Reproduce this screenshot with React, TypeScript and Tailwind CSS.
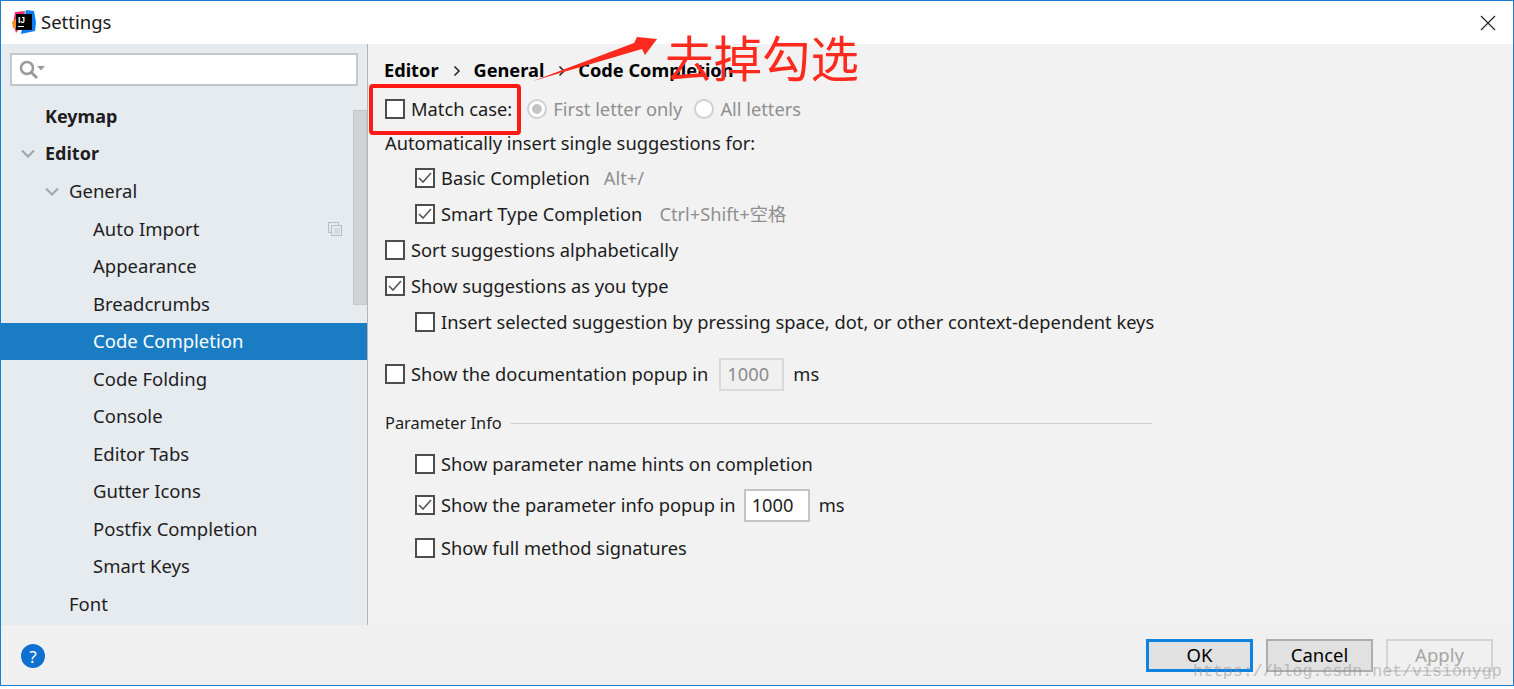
const font = { fontFamily: '"Noto Sans", "Noto Sans CJK SC", sans-serif' };

const treeItems = [
  { label: "Keymap", indent: "pl-[44px]", bold: true },
  { label: "Editor", indent: "pl-[44px]", bold: true, arrow: "left-[19px]" },
  { label: "General", indent: "pl-[68px]", arrow: "left-[43px]" },
  { label: "Auto Import", indent: "pl-[92px]", copy: true },
  { label: "Appearance", indent: "pl-[92px]" },
  { label: "Breadcrumbs", indent: "pl-[92px]" },
  { label: "Code Completion", indent: "pl-[92px]", selected: true },
  { label: "Code Folding", indent: "pl-[92px]" },
  { label: "Console", indent: "pl-[92px]" },
  { label: "Editor Tabs", indent: "pl-[92px]" },
  { label: "Gutter Icons", indent: "pl-[92px]" },
  { label: "Postfix Completion", indent: "pl-[92px]" },
  { label: "Smart Keys", indent: "pl-[92px]" },
  { label: "Font", indent: "pl-[68px]" },
];

function Logo() {
  return (
    <svg width="24" height="24" viewBox="0 0 24 24" className="mb-[2px] shrink-0">
      <polygon points="3,2 13,1 11,14 4,23 1,14" fill="#f2316e" />
      <polygon points="0,12 5,8 6,18 1,18" fill="#f78c1e" />
      <polygon points="14,0 22,1 24,12 23,21 9,24" fill="#087cfa" />
      <rect x="4" y="4" width="16" height="16" fill="#000" />
      <text x="6" y="12.5" fill="#fff" fontSize="8.5" fontWeight="700" style={{ fontFamily: '"Liberation Sans", sans-serif' }}>
        IJ
      </text>
      <rect x="6" y="16" width="6" height="1" fill="#fff" />
    </svg>
  );
}

function SearchIcon() {
  return (
    <svg width="26" height="22" viewBox="0 0 26 22">
      <circle cx="8" cy="9" r="6" fill="none" stroke="#9a9a9a" strokeWidth="2.6" />
      <path d="M12 13l6 6" stroke="#9a9a9a" strokeWidth="3" />
      <polygon points="18,7 26,7 22,11.5" fill="#9a9a9a" />
    </svg>
  );
}

function Chevron() {
  return (
    <svg width="16" height="10" viewBox="0 0 16 10">
      <path d="M2 1.5l6 6 6-6" fill="none" stroke="#9fa5aa" strokeWidth="2" />
    </svg>
  );
}

function CopyIcon() {
  return (
    <svg width="14" height="14" viewBox="0 0 14 14" className="absolute left-[327px] top-[12px]">
      <path d="M3.5 10.5h-3v-10h10v3" fill="none" stroke="#b9bec2" />
      <rect x="3.5" y="3.5" width="10" height="10" fill="none" stroke="#b9bec2" />
      <path d="M6 7h6M6 9h6M6 11h6" stroke="#c6cacd" />
    </svg>
  );
}

function Checkbox({ checked }: { checked?: boolean }) {
  return (
    <span className="mr-[6px] flex h-[20px] w-[20px] shrink-0 items-center justify-center border-2 border-[#4d4d4d] bg-white">
      {checked && (
        <svg width="16" height="16" viewBox="0 0 16 16">
          <path d="M2 8l4 4 8-9" fill="none" stroke="#5a5a5a" strokeWidth="1.7" />
        </svg>
      )}
    </span>
  );
}

function Radio({ checked }: { checked?: boolean }) {
  return (
    <span className="mr-[6px] flex h-[20px] w-[20px] shrink-0 items-center justify-center rounded-full border-2 border-[#cfcfcf] bg-white">
      {checked && <span className="h-[10px] w-[10px] rounded-full bg-[#c4c4c4]" />}
    </span>
  );
}

function CheckRow({
  label,
  checked,
  indent,
  className,
  children,
}: {
  label: string;
  checked?: boolean;
  indent?: boolean;
  className: string;
  children?: React.ReactNode;
}) {
  return (
    <div className={`flex items-center whitespace-nowrap ${indent ? "pl-[30px]" : ""} ${className}`}>
      <Checkbox checked={checked} />
      <span>{label}</span>
      {children}
    </div>
  );
}

function NumberBox({ disabled, className }: { disabled?: boolean; className: string }) {
  return (
    <span
      className={`flex h-[33px] items-center border-2 pl-[6px] ${
        disabled ? "w-[65px] border-[#d9d9d9] bg-[#f0f0f0] text-[#8c8c8c]" : "w-[66px] border-[#c4c4c4] bg-white"
      } ${className}`}
    >
      1000
    </span>
  );
}

function Sidebar() {
  return (
    <div className="relative flex w-[367px] shrink-0 flex-col overflow-hidden border-r border-[#b4b4b4] bg-[#e6ebf0]">
      <div className="mx-[9px] mt-[9px] flex h-[33px] w-[348px] items-center border-2 border-[#c4c7c9] bg-white pl-[7px]">
        <SearchIcon />
      </div>
      <div className="absolute right-0 top-[66px] h-[195px] w-[14px] border border-[#c4c8cb] bg-[#ced3d6]" />
      <div className="mt-[11.5px]">
        {treeItems.map((item) => (
          <div
            key={item.label}
            className={`relative flex h-[37.5px] items-center ${item.indent} ${
              item.selected ? "bg-[#1a7dc4] text-white" : "text-[#1e1e1e]"
            } ${item.bold ? "text-[18px] font-bold" : ""}`}
          >
            {item.arrow && (
              <span className={`absolute top-[14px] flex ${item.arrow}`}>
                <Chevron />
              </span>
            )}
            {item.label}
            {item.copy && <CopyIcon />}
          </div>
        ))}
      </div>
    </div>
  );
}

function Content() {
  return (
    <div className="min-w-0 flex-1 bg-[#f2f2f2] pl-[17px] text-[18.3px] text-[#1c1c1c]">
      <div className="-ml-px mt-[13px] flex h-[28px] items-center text-[18.2px] font-bold text-black">
        <span>Editor</span>
        <svg width="8" height="12" viewBox="0 0 8 12" className="ml-[14px] mr-[13px]">
          <path d="M1.5 1.5l4.5 4.5-4.5 4.5" fill="none" stroke="#222" strokeWidth="1.5" />
        </svg>
        <span>General</span>
        <svg width="8" height="12" viewBox="0 0 8 12" className="ml-[14px] mr-[12px]">
          <path d="M1.5 1.5l4.5 4.5-4.5 4.5" fill="none" stroke="#222" strokeWidth="1.5" />
        </svg>
        <span>Code Completion</span>
      </div>
      <CheckRow label="Match case:" className="mt-[6px] h-[36px]">
        <span className="ml-[15px] flex items-center text-[#8f8f8f]">
          <Radio checked />
          <span>First letter only</span>
          <span className="ml-[12px] flex items-center">
            <Radio />
            <span>All letters</span>
          </span>
        </span>
      </CheckRow>
      <div className="flex h-[32px] items-center whitespace-nowrap">Automatically insert single suggestions for:</div>
      <CheckRow label="Basic Completion" checked indent className="mt-[1px] h-[36px]">
        <span className="ml-[14px] text-[#8f8f8f]">Alt+/</span>
      </CheckRow>
      <CheckRow label="Smart Type Completion" checked indent className="h-[36px]">
        <span className="ml-[17px] text-[#8f8f8f]">Ctrl+Shift+空格</span>
      </CheckRow>
      <CheckRow label="Sort suggestions alphabetically" className="h-[36px]" />
      <CheckRow label="Show suggestions as you type" checked className="h-[36px]" />
      <CheckRow label="Insert selected suggestion by pressing space, dot, or other context-dependent keys" indent className="h-[36px]" />
      <CheckRow label="Show the documentation popup in" className="mt-[16px] h-[36px]">
        <NumberBox disabled className="ml-[11px]" />
        <span className="ml-[9px]">ms</span>
      </CheckRow>
      <div className="mt-[18px] flex h-[26px] w-[767px] items-center text-[16.4px]">
        <span className="whitespace-nowrap">Parameter Info</span>
        <span className="ml-[9px] h-px flex-1 bg-[#cdcdcd]" />
      </div>
      <CheckRow label="Show parameter name hints on completion" indent className="mt-[10px] h-[36px]" />
      <CheckRow label="Show the parameter info popup in" checked indent className="mt-[5px] h-[36px]">
        <NumberBox className="ml-[8px]" />
        <span className="ml-[9px]">ms</span>
      </CheckRow>
      <CheckRow label="Show full method signatures" indent className="mt-[7px] h-[36px]" />
    </div>
  );
}

function Footer() {
  return (
    <div className="flex h-[60px] shrink-0 items-center bg-[#f0f0f0] pl-[20px] pr-[20px]">
      <span className="mt-[2px] flex h-[24px] w-[24px] items-center justify-center rounded-full bg-[#0e70d1] text-[17px] leading-none text-white">
        ?
      </span>
      <div className="ml-auto flex gap-[13px]">
        <span className="flex h-[33px] w-[107px] items-center justify-center border-[3px] border-[#0f83e0] bg-[#e1e1e1] text-black">OK</span>
        <span className="flex h-[33px] w-[107px] items-center justify-center border-2 border-[#adadad] bg-[#e1e1e1] text-black">Cancel</span>
        <span className="flex h-[33px] w-[107px] items-center justify-center border-2 border-[#d4d4d4] bg-[#f0f0f0] text-[#a6a6a6]">Apply</span>
      </div>
    </div>
  );
}

export default function App() {
  return (
    <div className="relative h-[689px] w-[1514px] overflow-hidden bg-white text-[18.5px]" style={font}>
      <div className="flex h-[686px] flex-col border-x border-y border-[#1a7fd0]">
        <div className="flex h-[43px] shrink-0 items-center bg-white pl-[11px] text-[#1a1a1a]">
          <Logo />
          <span className="mb-[2px] ml-[5px]">Settings</span>
          <svg width="16" height="16" viewBox="0 0 16 16" className="ml-auto mr-[17px]">
            <path d="M1 1l14 14M15 1L1 15" stroke="#222" strokeWidth="1.2" />
          </svg>
        </div>
        <div className="flex min-h-0 flex-1">
          <Sidebar />
          <Content />
        </div>
        <Footer />
      </div>

      {/* annotations drawn over the screenshot */}
      <div className="absolute left-[369px] top-[84px] h-[51px] w-[152px] rounded-[4px] border-4 border-[#ff1a14]" />
      <svg width="140" height="60" viewBox="0 0 140 60" className="absolute left-[525px] top-[30px]">
        <polygon points="8,51 109,13 112,7 132,9 120,25 117,19" fill="#ff2a1e" />
      </svg>
      <span
        className="absolute left-[665px] top-[21px] whitespace-nowrap text-[48.5px] leading-[70px] text-[#ff2a1e]"
        style={{ fontFamily: '"Noto Sans CJK SC", sans-serif', fontWeight: 400 }}
      >
        去掉勾选
      </span>
      <span
        className="absolute left-[1193px] top-[661px] whitespace-nowrap text-[16.6px] leading-[22px] text-[#8a8a8a]/50"
        style={{ fontFamily: '"Liberation Mono", monospace' }}
      >
        https://blog.csdn.net/visionygp
      </span>
    </div>
  );
}
